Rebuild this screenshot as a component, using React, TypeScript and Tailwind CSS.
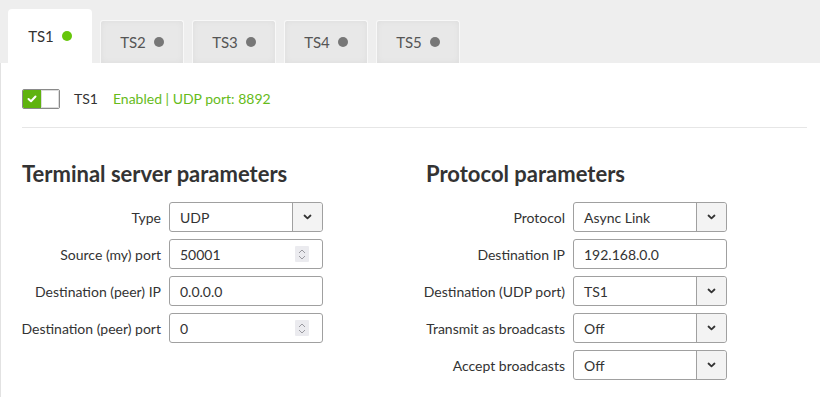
import React from "react";

type Row = { label: string; value: string; kind: "select" | "text" | "number" };

const leftRows: Row[] = [
  { label: "Type", value: "UDP", kind: "select" },
  { label: "Source (my) port", value: "50001", kind: "number" },
  { label: "Destination (peer) IP", value: "0.0.0.0", kind: "text" },
  { label: "Destination (peer) port", value: "0", kind: "number" },
];

const rightRows: Row[] = [
  { label: "Protocol", value: "Async Link", kind: "select" },
  { label: "Destination IP", value: "192.168.0.0", kind: "text" },
  { label: "Destination (UDP port)", value: "TS1", kind: "select" },
  { label: "Transmit as broadcasts", value: "Off", kind: "select" },
  { label: "Accept broadcasts", value: "Off", kind: "select" },
];

function Chevron() {
  return (
    <svg width="9" height="6" viewBox="0 0 9 6" fill="none">
      <path d="M1.5 1.5 L4.5 4.3 L7.5 1.5" stroke="#333" strokeWidth="1.8" strokeLinecap="round" strokeLinejoin="round" />
    </svg>
  );
}

function Spinner() {
  return (
    <div className="flex h-[16px] w-[14px] flex-col items-center justify-center gap-[1px] rounded-[1px] bg-[#ebebef]">
      <svg width="8" height="5" viewBox="0 0 8 5" fill="none">
        <path d="M1 4 L4 1 L7 4" stroke="#9a9aa0" strokeWidth="1" />
      </svg>
      <svg width="8" height="5" viewBox="0 0 8 5" fill="none">
        <path d="M1 1 L4 4 L7 1" stroke="#9a9aa0" strokeWidth="1" />
      </svg>
    </div>
  );
}

function Field({ row }: { row: Row }) {
  return (
    <div className="mb-[7px] flex h-[30px] items-center gap-[8px]">
      <span className="flex w-[139px] shrink-0 justify-end whitespace-nowrap text-[14px] text-[#333]">{row.label}</span>
      <div className="flex h-[30px] w-[154px] items-stretch rounded-[3px] border border-[#a0a0a0] bg-white">
        <span className="flex flex-1 items-center pl-[10px] text-[14px] text-[#333]">{row.value}</span>
        {row.kind === "select" && (
          <span className="flex w-[30px] items-center justify-center rounded-r-[3px] border-l border-[#a0a0a0] bg-[#f3f3f3]">
            <Chevron />
          </span>
        )}
        {row.kind === "number" && (
          <span className="flex items-center pr-[13px]">
            <Spinner />
          </span>
        )}
      </div>
    </div>
  );
}

export default function App() {
  const tabs = ["TS2", "TS3", "TS4", "TS5"];
  return (
    <div className="flex h-[397px] w-[820px] flex-col overflow-hidden bg-[#eeeeee] font-['Lato',sans-serif]">
      <div className="flex h-[63px] shrink-0 items-end gap-[8px] pl-[8px]">
        <div className="flex h-[54px] w-[84px] items-center justify-center gap-[8px] rounded-t-[4px] bg-white text-[15px] text-[#333]">
          <span>TS1</span>
          <span className="h-[10px] w-[10px] rounded-full bg-[#66c60a]" />
        </div>
        {tabs.map((t) => (
          <div
            key={t}
            className="flex h-[43px] w-[84px] items-center justify-center gap-[8px] rounded-t-[3px] border border-b-0 border-[#f8f8f8] bg-[#e8e8e8] text-[15px] text-[#555] shadow-[inset_0_0_6px_rgba(0,0,0,0.05)]"
          >
            <span>{t}</span>
            <span className="h-[10px] w-[10px] rounded-full bg-[#777]" />
          </div>
        ))}
      </div>

      <div className="flex-1 border-l border-[#e2e2e2] bg-white pl-[21px] pr-[13px]">
        <div className="flex items-center border-b border-[#e6e6e6] pb-[18px] pt-[25px]">
          <div className="flex h-[20px] w-[38px] overflow-hidden rounded-[2px] border border-[#8a8a8a]">
            <span className="flex w-[18px] items-center justify-center bg-[#5fb30f]">
              <svg width="10" height="8" viewBox="0 0 10 8" fill="none">
                <path d="M1.5 4 L4 6.3 L8.5 1.5" stroke="white" strokeWidth="2" strokeLinecap="round" strokeLinejoin="round" />
              </svg>
            </span>
            <span className="flex-1 border border-[#dcdcdc] bg-white" />
          </div>
          <span className="ml-[14px] text-[14px] text-[#333]">TS1</span>
          <span className="ml-[15px] text-[14px] text-[#66bb1a]">Enabled | UDP port: 8892</span>
        </div>

        <div className="grid grid-cols-[404px_1fr] pt-[33px]">
          <div>
            <h2 className="mb-[15px] text-[22px] font-bold leading-[1.2] text-[#333]">Terminal server parameters</h2>
            {leftRows.map((r) => (
              <Field key={r.label} row={r} />
            ))}
          </div>
          <div>
            <h2 className="mb-[15px] text-[22px] font-bold leading-[1.2] text-[#333]">Protocol parameters</h2>
            {rightRows.map((r) => (
              <Field key={r.label} row={r} />
            ))}
          </div>
        </div>
      </div>
    </div>
  );
}
